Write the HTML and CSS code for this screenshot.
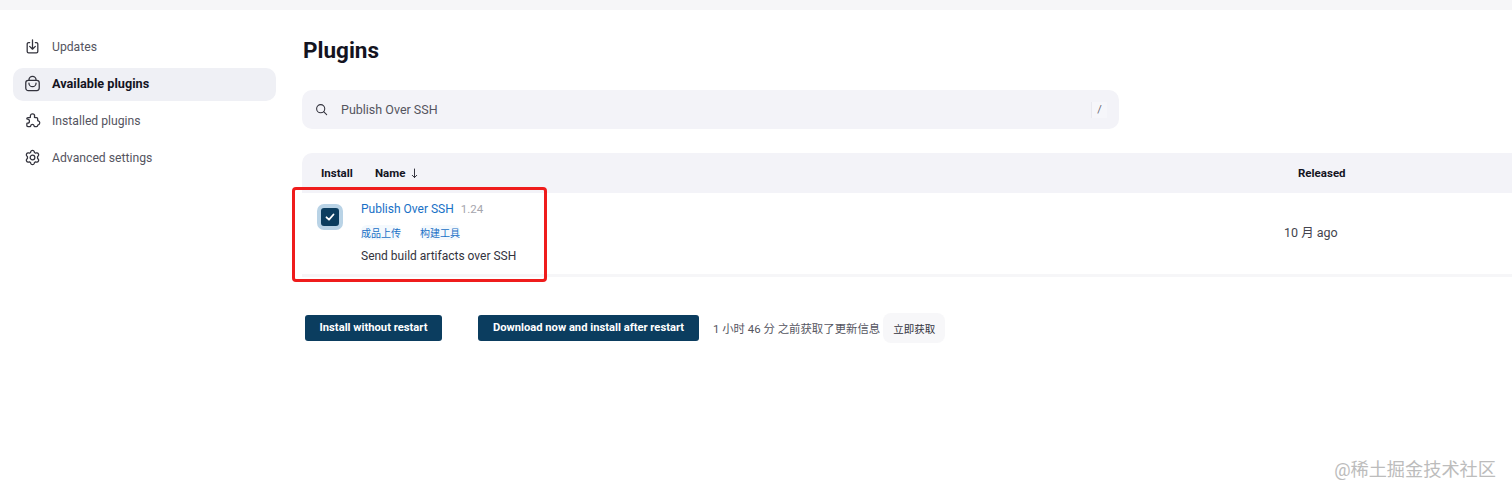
FILE: index.html
```html
<!DOCTYPE html>
<html lang="en">
<head>
    <meta charset="UTF-8">
    <meta name="viewport" content="width=device-width, initial-scale=1.0">
    <title>Plugins</title>
    <link rel="stylesheet" href="styles.css">
</head>
<body>
    <div class="topbar"></div>

    <div class="page">
        <nav class="sidebar">
            <a class="side-item">
                <svg class="side-icon" viewBox="0 0 24 24"><path d="M8 6.500H6.500a2 2 0 0 0-2 2V19a2 2 0 0 0 2 2h11a2 2 0 0 0 2-2V8.500a2 2 0 0 0-2-2H16"/><path d="M12 2.500v13M8 11.800l4 4 4-4"/></svg>
                Updates
            </a>
            <a class="side-item active">
                <svg class="side-icon" viewBox="0 0 24 24"><rect x="2.500" y="7.500" width="19" height="14.500" rx="3.500"/><path d="M7 7.500V7a5 5 0 0 1 10 0v.5"/><path d="M7 11.500a5 5 0 0 0 10 0"/></svg>
                Available plugins
            </a>
            <a class="side-item">
                <svg class="side-icon" viewBox="0 0 24 24"><path d="M9 5.500a3 3 0 0 1 6 0c0 .8-.3 1.300-.3 1.800 0 .5.400.7 1 .7h2.100a1.500 1.500 0 0 1 1.500 1.500v2c0 .6.300 1 .8 1a2.900 2.900 0 0 1 0 5.600c-.5 0-.8.400-.8 1a1.500 1.500 0 0 1-1.500 1.400h-2.600c-.6 0-.9-.4-.9-.9a2.500 2.500 0 0 0-4.900 0c0 .5-.3.900-.9.900H5.500A1.500 1.500 0 0 1 4 19v-2.300c0-.6.400-.9.900-.9a2.800 2.800 0 0 0 0-5.600c-.5 0-.9-.3-.9-.9V9.500A1.500 1.500 0 0 1 5.500 8h2.600c.6 0 .9-.2.900-.7 0-.5 0-1 0-1.800z"/></svg>
                Installed plugins
            </a>
            <a class="side-item">
                <svg class="side-icon" viewBox="0 0 24 24"><path d="M9.500 3.800a2.600 2.600 0 0 1 5 0l.3 1.200 1.500.9 1.200-.3a2.600 2.600 0 0 1 2.500 4.300l-.9.900v2.400l.9.900a2.600 2.600 0 0 1-2.500 4.300l-1.200-.3-1.500.9-.3 1.200a2.600 2.600 0 0 1-5 0l-.3-1.200-1.500-.9-1.200.3a2.600 2.600 0 0 1-2.500-4.300l.9-.9v-2.400l-.9-.9a2.600 2.600 0 0 1 2.500-4.300l1.200.3 1.500-.9z"/><circle cx="12" cy="12" r="3.300"/></svg>
                Advanced settings
            </a>
        </nav>

        <main class="content">
            <h1>Plugins</h1>

            <div class="search">
                <svg class="search-icon" viewBox="0 0 24 24"><circle cx="10.500" cy="10.500" r="7.500"/><path d="M16 16l5.500 5.500"/></svg>
                <span class="search-text">Publish Over SSH</span>
                <span class="search-key">/</span>
            </div>

            <div class="table-wrap">
                <div class="table-head">
                    <span class="col-install">Install</span>
                    <span class="col-name">Name
                        <svg class="sort-arrow" viewBox="0 0 10 12"><path d="M5 1v9.500M2.500 8 5 10.500 7.500 8"/></svg>
                    </span>
                    <span class="col-released">Released</span>
                </div>
                <div class="table-row">
                    <div class="checkbox-cell">
                        <span class="checkbox">
                            <svg viewBox="0 0 12 12"><path d="M2.500 6.300 5 8.700l4.500-5.200"/></svg>
                        </span>
                    </div>
                    <div class="plugin-info">
                        <div class="plugin-title">
                            <a class="plugin-name">Publish Over SSH</a>
                            <span class="plugin-version">1.24</span>
                        </div>
                        <div class="plugin-tags">
                            <span class="tag">成品上传</span>
                            <span class="tag">构建工具</span>
                        </div>
                        <div class="plugin-desc">Send build artifacts over SSH</div>
                    </div>
                    <div class="plugin-released">10 月 ago</div>
                </div>
            </div>

            <div class="actions">
                <button class="btn btn-first">Install without restart</button>
                <button class="btn">Download now and install after restart</button>
                <span class="update-info">1 小时 46 分 之前获取了更新信息</span>
                <button class="btn-light">立即获取</button>
            </div>
        </main>
    </div>

    <div class="highlight-box"></div>
    <div class="watermark">@稀土掘金技术社区</div>
</body>
</html>
```

FILE: styles.css
```css
* {
    box-sizing: border-box;
}

html, body {
    height: 100%;
}

body {
    margin: 0;
    font-family: Roboto, 'Noto Sans CJK SC', sans-serif;
    font-size: 12.500px;
    color: #2b2b33;
    background-color: white;
    overflow: hidden;
    position: relative;
}

.topbar {
    height: 10px;
    background-color: #f6f6f8;
}

.page {
    display: flex;
}

.sidebar {
    width: 302px;
    flex-shrink: 0;
    padding: 21px 26px 0 13px;
    display: flex;
    flex-direction: column;
    gap: 4px;
    font-size: 12.200px;
}

.side-item {
    display: flex;
    align-items: center;
    gap: 11px;
    height: 33px;
    padding: 0 0 2px 11px;
    border-radius: 10px;
    color: #55555f;
}

.side-item.active {
    background-color: #eff0f5;
    color: #14141f;
    font-size: 12.700px;
    font-weight: 700;
}

.side-icon {
    width: 17px;
    height: 17px;
    fill: none;
    stroke: #33333d;
    stroke-width: 1.800;
    stroke-linecap: round;
    stroke-linejoin: round;
    flex-shrink: 0;
}

.content {
    flex-grow: 1;
    min-width: 0;
}

h1 {
    margin: 0;
    padding-top: 23px;
    padding-left: 1px;
    font-size: 22.500px;
    line-height: 34px;
    font-weight: 700;
    color: #14141f;
}

.search {
    display: flex;
    align-items: center;
    width: 817px;
    height: 39px;
    margin-top: 23px;
    padding: 0 12px 0 13px;
    background-color: #f3f3f8;
    border-radius: 10px;
}

.search-icon {
    width: 13px;
    height: 13px;
    fill: none;
    stroke: #33333d;
    stroke-width: 2;
    stroke-linecap: round;
}

.search-text {
    margin-left: 13px;
    flex-grow: 1;
    color: #55555f;
}

.search-key {
    width: 16px;
    height: 16px;
    line-height: 16px;
    text-align: center;
    font-size: 11px;
    color: #66666f;
    background-color: #f6f6fa;
    border-left: 1px solid #e9e9ef;
}

.table-wrap {
    margin-top: 24px;
}

.table-head {
    display: flex;
    align-items: center;
    height: 40px;
    background-color: #f3f3f8;
    border-radius: 10px 0 0 0;
    font-size: 11.500px;
    font-weight: 700;
    color: #14141f;
}

.col-install {
    margin-left: 19px;
    width: 54px;
}

.col-name {
    flex-grow: 1;
    display: flex;
    align-items: center;
    gap: 5px;
}

.sort-arrow {
    width: 9px;
    height: 11px;
    fill: none;
    stroke: #33333d;
    stroke-width: 1.100;
    stroke-linecap: round;
    stroke-linejoin: round;
}

.col-released {
    width: 214px;
}

.table-row {
    display: flex;
    height: 84px;
    border-bottom: 3px solid #f6f6f8;
}

.checkbox-cell {
    width: 59px;
    padding: 11px 0 0 15px;
    flex-shrink: 0;
}

.checkbox {
    display: flex;
    align-items: center;
    justify-content: center;
    width: 26px;
    height: 26px;
    background-color: #0b3d5f;
    border: 4px solid #b9d3e6;
    border-radius: 7px;
}

.checkbox svg {
    width: 12px;
    height: 12px;
    fill: none;
    stroke: white;
    stroke-width: 1.800;
    stroke-linecap: round;
    stroke-linejoin: round;
}

.plugin-info {
    flex-grow: 1;
    padding-top: 9px;
}

.plugin-title {
    display: flex;
    align-items: baseline;
    gap: 7px;
    font-size: 12px;
}

.plugin-name {
    color: #1870c6;
}

.plugin-version {
    font-size: 11.500px;
    color: #a5a5ad;
}

.plugin-tags {
    display: flex;
    gap: 19px;
    margin-top: 9px;
}

.tag {
    font-size: 10px;
    color: #1870c6;
    background-color: #f4f9fd;
    border-radius: 6px;
}

.plugin-desc {
    margin-top: 9px;
    font-size: 12px;
    color: #33333d;
}

.plugin-released {
    width: 228px;
    flex-shrink: 0;
    padding-top: 29px;
    color: #44444e;
}

.actions {
    display: flex;
    align-items: center;
    margin-top: 36px;
    padding-left: 3px;
}

.btn {
    height: 26px;
    padding: 0 0 1px;
    width: 221px;
    background-color: #0b3d5f;
    color: white;
    border: none;
    border-radius: 3px;
    font-family: inherit;
    font-size: 11.200px;
    font-weight: 700;
    white-space: nowrap;
}

.btn-first {
    width: 137px;
    margin-right: 36px;
}

.update-info {
    margin-left: 14px;
    font-size: 11.400px;
    color: #55555f;
}

.btn-light {
    height: 30px;
    margin-left: 3px;
    padding: 0 10px;
    background-color: #f7f7f9;
    color: #33333d;
    border: none;
    border-radius: 8px;
    font-family: inherit;
    font-size: 10.500px;
}

/* red annotation over the plugin row */
.highlight-box {
    position: absolute;
    left: 292px;
    top: 187px;
    width: 255px;
    height: 95px;
    border: 3px solid #ef1c1c;
    border-radius: 4px;
}

.watermark {
    position: absolute;
    right: 16px;
    top: 455px;
    font-size: 18.200px;
    color: #bcbcbc;
}
```
